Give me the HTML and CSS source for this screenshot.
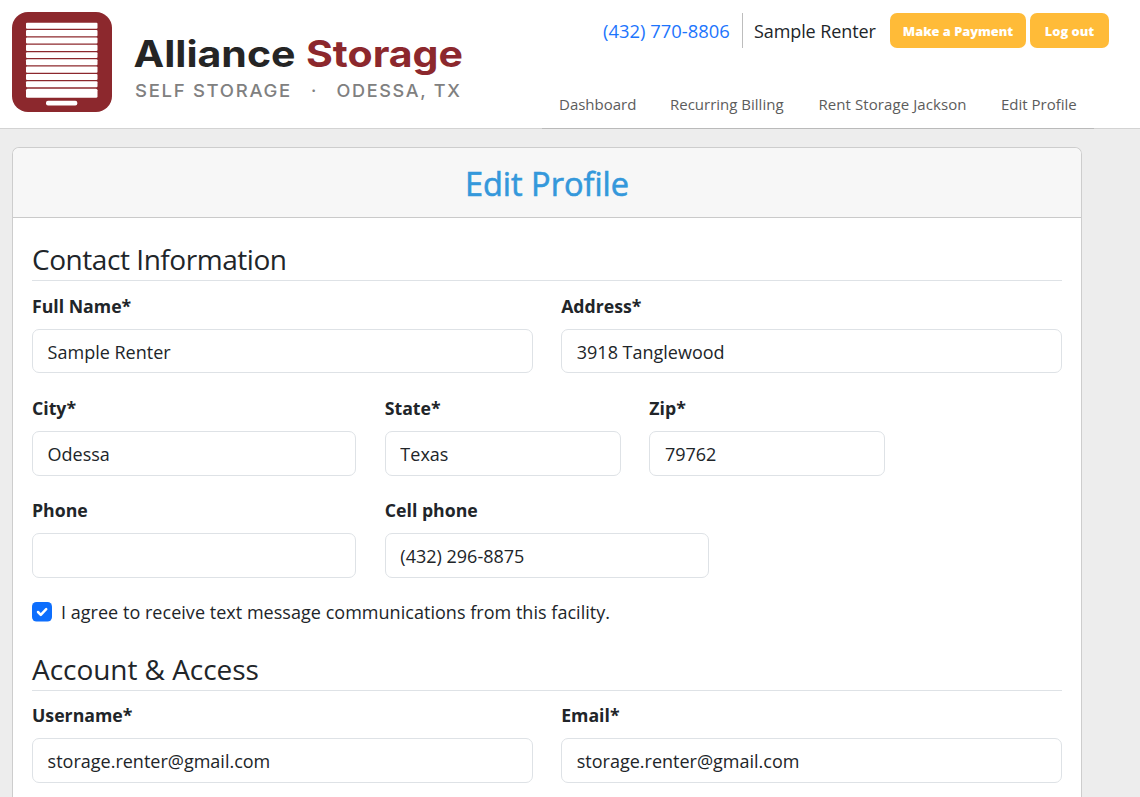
FILE: index.html
```html
<!DOCTYPE html>
<html lang="en">
<head>
  <meta charset="UTF-8">
  <title>Edit Profile - Alliance Storage</title>
  <link rel="stylesheet" href="styles.css">
</head>
<body>
  <header class="site-header">
    <a class="logo" href="#">
      <svg width="470" height="124" viewBox="0 0 470 124">
        <rect x="12" y="12" width="100" height="100" rx="16" fill="#8c282d"/>
        <g fill="#fff">
          <rect x="26" y="22.7" width="71.5" height="6" rx="1"/>
          <rect x="26" y="30" width="71.5" height="6.3" rx="1"/>
          <rect x="26" y="37.5" width="71.5" height="6" rx="1"/>
          <rect x="26" y="44.7" width="71.5" height="6.2" rx="1"/>
          <rect x="26" y="52.2" width="71.5" height="5.9" rx="1"/>
          <rect x="26" y="59.3" width="71.5" height="6" rx="1"/>
          <rect x="26" y="66.6" width="71.5" height="6.2" rx="1"/>
          <rect x="26" y="74" width="71.5" height="6" rx="1"/>
          <rect x="26" y="81.3" width="71.5" height="6" rx="1"/>
          <rect x="26" y="88.8" width="71.5" height="9" rx="1.5"/>
          <rect x="46" y="100.8" width="31.3" height="4.8" rx="2"/>
        </g>
        <text class="logo-name" x="133.5" y="67.3" textLength="162" lengthAdjust="spacingAndGlyphs">Alliance</text>
        <text class="logo-name logo-red" x="306" y="67.3" textLength="157" lengthAdjust="spacingAndGlyphs">Storage</text>
        <text class="logo-sub" x="135" y="96.6" textLength="157" lengthAdjust="spacingAndGlyphs">SELF STORAGE</text>
        <text class="logo-sub" x="311" y="96.6">·</text>
        <text class="logo-sub" x="336.5" y="96.6" textLength="125" lengthAdjust="spacingAndGlyphs">ODESSA, TX</text>
      </svg>
    </a>
    <div class="header-right">
      <div class="account-bar">
        <a class="phone" href="#">(432) 770-8806</a>
        <span class="renter">Sample Renter</span>
        <button class="btn btn-pay">Make a Payment</button>
        <button class="btn btn-logout">Log out</button>
      </div>
      <nav class="main-nav">
        <a class="nav-dash" href="#">Dashboard</a>
        <a class="nav-bill" href="#">Recurring Billing</a>
        <a class="nav-rent" href="#">Rent Storage Jackson</a>
        <a class="nav-edit" href="#">Edit Profile</a>
      </nav>
    </div>
  </header>

  <main class="card">
    <h1 class="card-header">Edit Profile</h1>
    <form class="card-body">
      <h2>Contact Information</h2>
      <div class="row">
        <div class="field col-6">
          <label for="name">Full Name*</label>
          <input type="text" id="name" value="Sample Renter">
        </div>
        <div class="field col-6">
          <label for="address">Address*</label>
          <input type="text" id="address" value="3918 Tanglewood">
        </div>
      </div>
      <div class="row">
        <div class="field col-4">
          <label for="city">City*</label>
          <input type="text" id="city" value="Odessa">
        </div>
        <div class="field col-3">
          <label for="state">State*</label>
          <input type="text" id="state" value="Texas">
        </div>
        <div class="field col-3">
          <label for="zip">Zip*</label>
          <input type="text" id="zip" value="79762">
        </div>
      </div>
      <div class="row">
        <div class="field col-4">
          <label for="phone">Phone</label>
          <input type="text" id="phone">
        </div>
        <div class="field col-4">
          <label for="cell">Cell phone</label>
          <input type="text" id="cell" value="(432) 296-8875">
        </div>
      </div>
      <div class="agree">
        <svg class="check" width="20" height="20" viewBox="0 0 20 20">
          <rect width="20" height="19.5" rx="4.5" fill="#0d6efd"/>
          <path d="M6 10l2.8 2.8 5.4-5.6" fill="none" stroke="#fff" stroke-width="2.5" stroke-linecap="round" stroke-linejoin="round"/>
        </svg>
        <span>I agree to receive text message communications from this facility.</span>
      </div>

      <h2 class="h2-account">Account &amp; Access</h2>
      <div class="row">
        <div class="field col-6">
          <label for="username">Username*</label>
          <input type="text" id="username" value="storage.renter@gmail.com">
        </div>
        <div class="field col-6">
          <label for="email">Email*</label>
          <input type="text" id="email" value="storage.renter@gmail.com">
        </div>
      </div>
    </form>
  </main>
</body>
</html>
```
FILE: styles.css
```css
* {
  box-sizing: border-box;
}
body {
  margin: 0;
  height: 100vh;
  display: flex;
  flex-direction: column;
  background: #ededed;
  color: #212529;
  font-family: "Open Sans", "Noto Sans", sans-serif;
  font-size: 18px;
}
a {
  text-decoration: none;
}

/* header */
.site-header {
  display: flex;
  flex-shrink: 0;
  justify-content: space-between;
  height: 129px;
  background: #fff;
  border-bottom: 1px solid #d3d3d3;
}
.logo-name {
  font-family: Inter, sans-serif;
  font-weight: 700;
  font-size: 37px;
  fill: #252525;
}
.logo-red {
  fill: #8c282d;
}
.logo-sub {
  font-family: Inter, sans-serif;
  font-weight: 500;
  font-size: 17.5px;
  letter-spacing: 1.6px;
  fill: #808080;
}
.header-right {
  width: 598px;
  height: 129px;
  display: flex;
  flex-direction: column;
  justify-content: space-between;
}
.account-bar {
  display: flex;
  align-items: center;
  height: 35px;
  margin-top: 13px;
  padding-left: 61px;
  white-space: nowrap;
}
.phone {
  width: 140px;
  line-height: 36px;
  height: 35px;
  border-right: 1px solid #bdbdbd;
  color: #1d75fd;
  margin-right: 11px;
  font-size: 18.4px;
}
.renter {
  width: 136px;
  letter-spacing: -0.1px;
}
.btn {
  height: 35px;
  padding: 0;
  border: 0;
  border-radius: 7px;
  background: #ffbb38;
  color: #fff;
  font-family: inherit;
  font-weight: 800;
  font-size: 12.8px;
}
.btn-pay {
  width: 136px;
  margin-right: 4px;
}
.btn-logout {
  width: 79px;
}
.main-nav {
  display: flex;
  width: 552px;
  height: 49px;
  padding: 14px 0 0 17px;
  border-bottom: 1px solid #bababa;
  font-size: 15px;
  line-height: 21px;
  white-space: nowrap;
}
.main-nav a {
  color: #5c5c5c;
}
.nav-dash {
  width: 111px;
}
.nav-bill {
  width: 148.5px;
}
.nav-rent {
  width: 182.5px;
  letter-spacing: 0.08px;
}

/* profile card */
.card {
  flex: 1;
  width: 1070px;
  margin: 18px 0 0 12px;
  background: #fff;
  border: 1px solid #cdcdcd;
  border-bottom: 0;
  border-radius: 7px 7px 0 0;
}
.card-header {
  margin: 0;
  height: 70px;
  line-height: 72px;
  background: #f7f7f7;
  border-bottom: 1px solid #cacaca;
  border-radius: 6px 6px 0 0;
  color: #3498db;
  font-size: 32.5px;
  font-weight: 500;
  -webkit-text-stroke: 0.6px #3498db;
  text-align: center;
}
.card-body {
  padding: 22px 19.2px 0 19px;
}
h2 {
  margin: 0 0 11px;
  height: 41px;
  line-height: 38px;
  border-bottom: 1px solid #dee2e6;
  font-size: 28px;
  font-weight: 400;
  letter-spacing: -0.45px;
}
.h2-account {
  margin-bottom: 10.4px;
  letter-spacing: -0.05px;
}
.row {
  display: grid;
  grid-template-columns: repeat(12, 1fr);
  column-gap: 28.5px;
  margin-bottom: 20.8px;
}
.row:last-child {
  margin-bottom: 0;
}
.col-3 {
  grid-column: span 3;
}
.col-4 {
  grid-column: span 4;
}
.col-6 {
  grid-column: span 6;
}
.field label {
  display: block;
  height: 37px;
  line-height: 28.4px;
  font-weight: 700;
  font-size: 17.7px;
}
.field input {
  display: block;
  width: 100%;
  height: 44.4px;
  padding: 1px 15px 0 14.6px;
  border: 1px solid #dee2e6;
  border-radius: 7px;
  background: #fff;
  color: #212529;
  font: inherit;
}
.agree {
  display: flex;
  align-items: center;
  gap: 9px;
  height: 27px;
  margin-bottom: 24.4px;
  letter-spacing: 0.03px;
}
```
